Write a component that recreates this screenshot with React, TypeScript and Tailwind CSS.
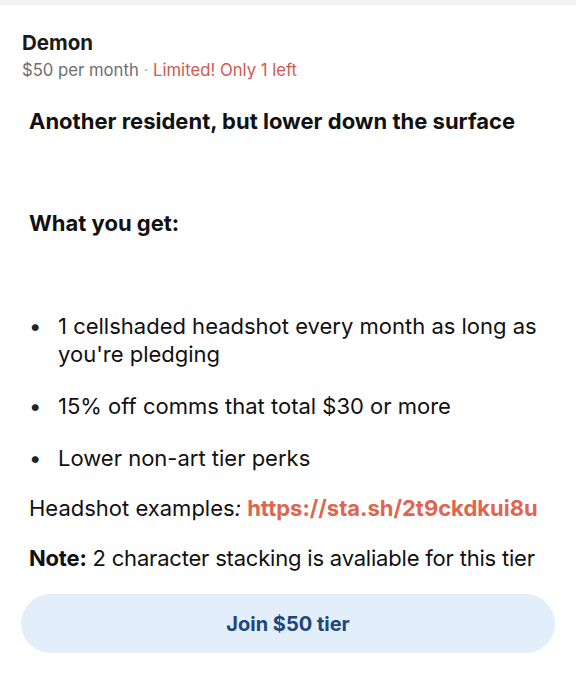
const perks = [
  ["1 cellshaded headshot every month as long as", "you're pledging"],
  ["15% off comms that total $30 or more"],
  ["Lower non-art tier perks"],
];

export default function App() {
  return (
    <div
      className="h-[680px] w-[576px] overflow-hidden bg-white text-[#111111]"
      style={{ fontFamily: "Inter, 'Noto Sans', sans-serif" }}
    >
      <div className="h-[5px] bg-[#f2f1ef]" />
      <div className="px-[22px] pt-[24px]">
        <h1 className="text-[20.5px] font-bold leading-[28px] text-[#1a1a1a]">Demon</h1>
        <p className="mt-[2px] text-[16.7px] leading-[22px] text-[#6f6f6f]">
          $50 per month <span className="text-[#b0b0b0]">·</span>{" "}
          <span className="text-[#cf5a4e]">Limited! Only 1 left</span>
        </p>
      </div>

      <div className="pl-[29px] pr-[10px] pt-[26px] text-[22px] leading-[28px]">
        <p className="font-bold">Another resident, but lower down the surface</p>
        <p className="mt-[74px] font-bold">What you get:</p>

        <ul className="mt-[75px] space-y-[24px]">
          {perks.map((lines) => (
            <li key={lines[0]} className="flex">
              <span className="w-[29px] shrink-0 text-[#222]">•</span>
              <span>
                {lines.map((l) => (
                  <span key={l} className="block whitespace-nowrap">
                    {l}
                  </span>
                ))}
              </span>
            </li>
          ))}
        </ul>

        <p className="mt-[22px] whitespace-nowrap">
          Headshot examples<i>:</i>{" "}
          <span className="font-bold text-[#e0654f]">https://sta.sh/2t9ckdkui8u</span>
        </p>
        <p className="mt-[22px] whitespace-nowrap tracking-[-0.2px]">
          <b>Note:</b> 2 character stacking is avaliable for this tier
        </p>
      </div>

      <div className="px-[21px] pt-[22px]">
        <button className="flex h-[59px] w-full items-center justify-center rounded-full bg-[#e2eef9] text-[20px] font-bold text-[#21467a]">
          Join $50 tier
        </button>
      </div>
    </div>
  );
}
